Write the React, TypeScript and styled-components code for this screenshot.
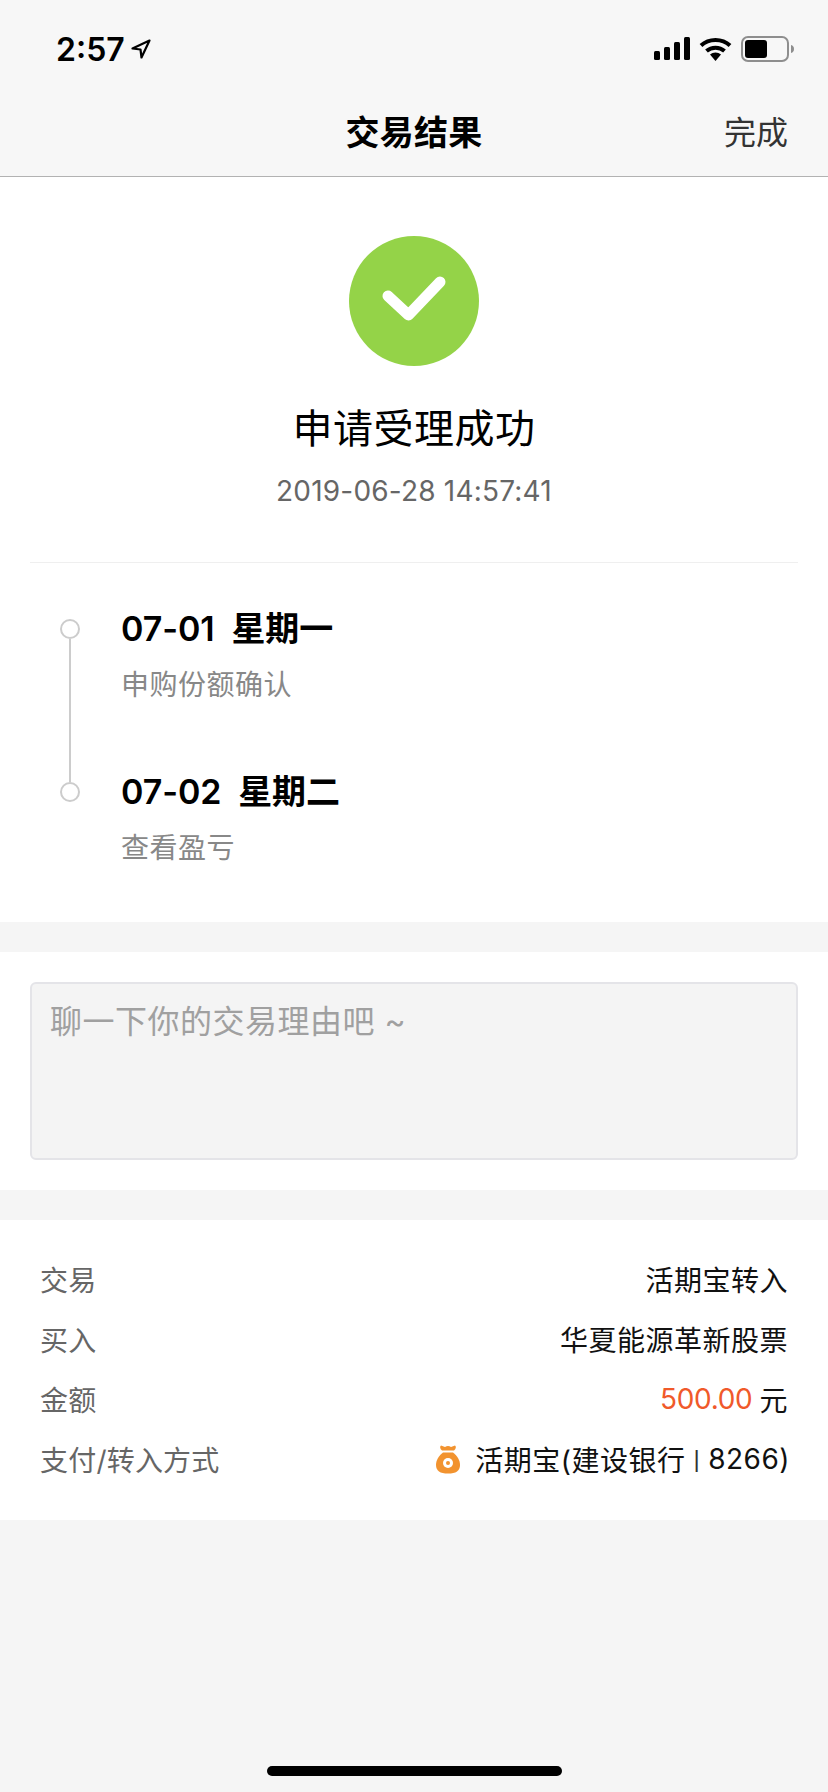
import React from 'react';
import styled, { createGlobalStyle } from 'styled-components';

const GlobalStyle = createGlobalStyle`
    html, body {
        margin: 0;
        padding: 0;
        background-color: #f5f5f5;
    }
    * {
        box-sizing: border-box;
    }
    body {
        font-family: 'Inter', 'Noto Sans CJK SC', sans-serif;
    }
`;

const Page = styled.div`
    position: relative;
    width: 828px;
    height: 1792px;
    overflow: hidden;
    background-color: #f5f5f5;
`;
const Header = styled.header`
    height: 177px;
    background-color: #f7f7f7;
    border-bottom: 1px solid #b2b2b2;
`;
const StatusBar = styled.div`
    height: 88px;
    padding: 10px 33px 0 56px;
    display: flex;
    align-items: center;
    justify-content: space-between;
`;
const Clock = styled.div`
    display: flex;
    align-items: center;
    gap: 6px;
    font-size: 32px;
    font-weight: 600;
    color: #000;
`;
const StatusIcons = styled.div`
    display: flex;
    align-items: center;
    gap: 9px;
`;
const NavBar = styled.nav`
    position: relative;
    height: 88px;
    display: flex;
    align-items: center;
    justify-content: center;
    padding-bottom: 4px;
`;
const NavTitle = styled.h1`
    margin: 0;
    font-size: 34px;
    font-weight: 600;
    letter-spacing: 0.2px;
    color: #000;
`;
const NavAction = styled.span`
    position: absolute;
    right: 40px;
    font-size: 32px;
    color: #333;
`;
const Section = styled.section<{ $gap?: boolean }>`
    background-color: #fff;
    margin-bottom: ${(p) => (p.$gap ? '30px' : '0')};
`;
const Hero = styled.div`
    margin: 0 30px;
    height: 386px;
    padding-top: 59px;
    display: flex;
    flex-direction: column;
    align-items: center;
    border-bottom: 1px solid #efefef;
`;
const SuccessMark = styled.svg`
    display: block;
    width: 130px;
    height: 130px;
`;
const ResultTitle = styled.h2`
    margin: 33px 0 0;
    font-size: 40px;
    line-height: 60px;
    font-weight: 400;
    letter-spacing: 0.5px;
    color: #000;
`;
const ResultTime = styled.div`
    margin-top: 12px;
    font-size: 28px;
    line-height: 40px;
    letter-spacing: 0.2px;
    color: #666;
`;
const Steps = styled.div`
    padding: 46px 0 0 60px;
    height: 359px;
`;
const Step = styled.div`
    display: flex;
    height: 163px;
`;
const Rail = styled.div`
    width: 20px;
    margin-right: 41px;
    padding-top: 10px;
    display: flex;
    flex-direction: column;
    align-items: center;
`;
const Dot = styled.span`
    flex: none;
    width: 20px;
    height: 20px;
    border-radius: 50%;
    border: 2px solid #ccc;
    background-color: #fff;
`;
const RailLine = styled.span`
    flex: 1;
    width: 2px;
    margin-bottom: -10px;
    background-color: #ccc;
`;
const StepTitle = styled.div`
    font-size: 34px;
    line-height: 40px;
    font-weight: 600;
    letter-spacing: -0.1px;
    color: #000;
    white-space: pre;
`;
const StepNote = styled.div`
    margin-top: 16px;
    font-size: 28px;
    line-height: 40px;
    letter-spacing: 0.5px;
    color: #888;
`;
const ReasonWrap = styled.div`
    padding: 30px;
`;
const ReasonBox = styled.div`
    height: 178px;
    padding: 16px 18px;
    background-color: #f4f4f4;
    border: 2px solid #e4e4e8;
    border-radius: 6px;
    font-size: 32px;
    line-height: 44px;
    letter-spacing: 0.5px;
    color: #a0a0a0;
`;
const Details = styled.div`
    height: 300px;
    padding: 29px 40px 31px;
`;
const DetailRow = styled.div`
    height: 60px;
    display: flex;
    align-items: center;
    justify-content: space-between;
    font-size: 28px;
`;
const DetailLabel = styled.span`
    letter-spacing: 0.2px;
    color: #666;
`;
const DetailValue = styled.span`
    display: flex;
    align-items: center;
    letter-spacing: 0.5px;
    color: #111;
`;
const PayValue = styled(DetailValue)`
    margin-right: -2px;
`;
const Amount = styled.span`
    color: #f0592a;
    margin-right: 7px;
    letter-spacing: -0.3px;
`;
const PayIcon = styled.svg`
    width: 24px;
    height: 30px;
    margin-right: 15px;
`;
const Pipe = styled.span`
    margin: 0 8px;
    font-family: 'Liberation Sans', sans-serif;
    font-size: 24px;
    color: #333;
`;
const HomeBar = styled.div`
    position: absolute;
    left: 267px;
    bottom: 16px;
    width: 295px;
    height: 10px;
    border-radius: 5px;
    background-color: #000;
`;

const steps = [
    { date: '07-01  星期一', note: '申购份额确认' },
    { date: '07-02  星期二', note: '查看盈亏' },
];

function App() {
    return (
        <Page>
            <GlobalStyle />
            <Header>
                <StatusBar>
                    <Clock>
                        2:57
                        <svg width="20" height="20" viewBox="0 0 20 20">
                            <path d="M18.5 1.5 1.5 9.5l8 1 1 8z" fill="none" stroke="#000" strokeWidth="2.2" strokeLinejoin="round" />
                        </svg>
                    </Clock>
                    <StatusIcons>
                        <svg width="36" height="24" viewBox="0 0 36 24">
                            <rect x="0" y="14" width="6" height="9" rx="1.5" fill="#000" />
                            <rect x="10" y="10" width="6" height="13" rx="1.5" fill="#000" />
                            <rect x="20" y="5" width="6" height="18" rx="1.5" fill="#000" />
                            <rect x="30" y="0" width="6" height="23" rx="1.5" fill="#000" />
                        </svg>
                        <svg width="33" height="24" viewBox="0 0 33 24">
                            <path d="M2 8.5C10 1 23 1 31 8.5" fill="none" stroke="#000" strokeWidth="4" />
                            <path d="M7.5 14c5-4.5 13-4.5 18 0" fill="none" stroke="#000" strokeWidth="4" />
                            <path d="M11 17.5c3-2.8 8-2.8 11 0L16.500 24z" fill="#000" />
                        </svg>
                        <svg width="54" height="26" viewBox="0 0 54 26">
                            <rect x="1" y="1" width="46" height="24" rx="6" fill="none" stroke="#8e8e8e" strokeWidth="2" />
                            <rect x="4" y="4" width="22" height="18" rx="3" fill="#000" />
                            <path d="M50 9c2 .5 3 2 3 4s-1 3.500-3 4z" fill="#8e8e8e" />
                        </svg>
                    </StatusIcons>
                </StatusBar>
                <NavBar>
                    <NavTitle>交易结果</NavTitle>
                    <NavAction>完成</NavAction>
                </NavBar>
            </Header>

            <Section $gap>
                <Hero>
                    <SuccessMark viewBox="0 0 130 130">
                        <circle cx="65" cy="65" r="65" fill="#94d348" />
                        <path d="M39 60 59.500 79 91 46" fill="none" stroke="#fff" strokeWidth="11" strokeLinecap="round" strokeLinejoin="round" />
                    </SuccessMark>
                    <ResultTitle>申请受理成功</ResultTitle>
                    <ResultTime>2019-06-28 14:57:41</ResultTime>
                </Hero>
                <Steps>
                    {steps.map((step, i) => (
                        <Step key={step.date}>
                            <Rail>
                                <Dot />
                                {i < steps.length - 1 && <RailLine />}
                            </Rail>
                            <div>
                                <StepTitle>{step.date}</StepTitle>
                                <StepNote>{step.note}</StepNote>
                            </div>
                        </Step>
                    ))}
                </Steps>
            </Section>

            <Section $gap>
                <ReasonWrap>
                    <ReasonBox>聊一下你的交易理由吧 ~</ReasonBox>
                </ReasonWrap>
            </Section>

            <Section>
                <Details>
                    <DetailRow>
                        <DetailLabel>交易</DetailLabel>
                        <DetailValue>活期宝转入</DetailValue>
                    </DetailRow>
                    <DetailRow>
                        <DetailLabel>买入</DetailLabel>
                        <DetailValue>华夏能源革新股票</DetailValue>
                    </DetailRow>
                    <DetailRow>
                        <DetailLabel>金额</DetailLabel>
                        <DetailValue>
                            <Amount>500.00</Amount>元
                        </DetailValue>
                    </DetailRow>
                    <DetailRow>
                        <DetailLabel>支付/转入方式</DetailLabel>
                        <PayValue>
                            <PayIcon viewBox="0 0 24 30">
                                <path d="M5 1.500 9 3c2-1.500 4-1.500 6 0l4-1.500c1.500 1 1 3.500-1 5H6c-2-1.500-2.500-4-1-5z" fill="#f2932f" />
                                <path d="M7 8.500h10C21 11.500 24 16 24 21c0 6-4 8.500-12 8.500S0 27 0 21C0 16 3 11.500 7 8.500z" fill="#f2932f" />
                                <circle cx="12" cy="19" r="5" fill="#fff" />
                                <circle cx="12" cy="19" r="2" fill="#f2932f" />
                            </PayIcon>
                            活期宝(建设银行<Pipe>|</Pipe>8266)
                        </PayValue>
                    </DetailRow>
                </Details>
            </Section>
            <HomeBar />
        </Page>
    );
}

export default App;
